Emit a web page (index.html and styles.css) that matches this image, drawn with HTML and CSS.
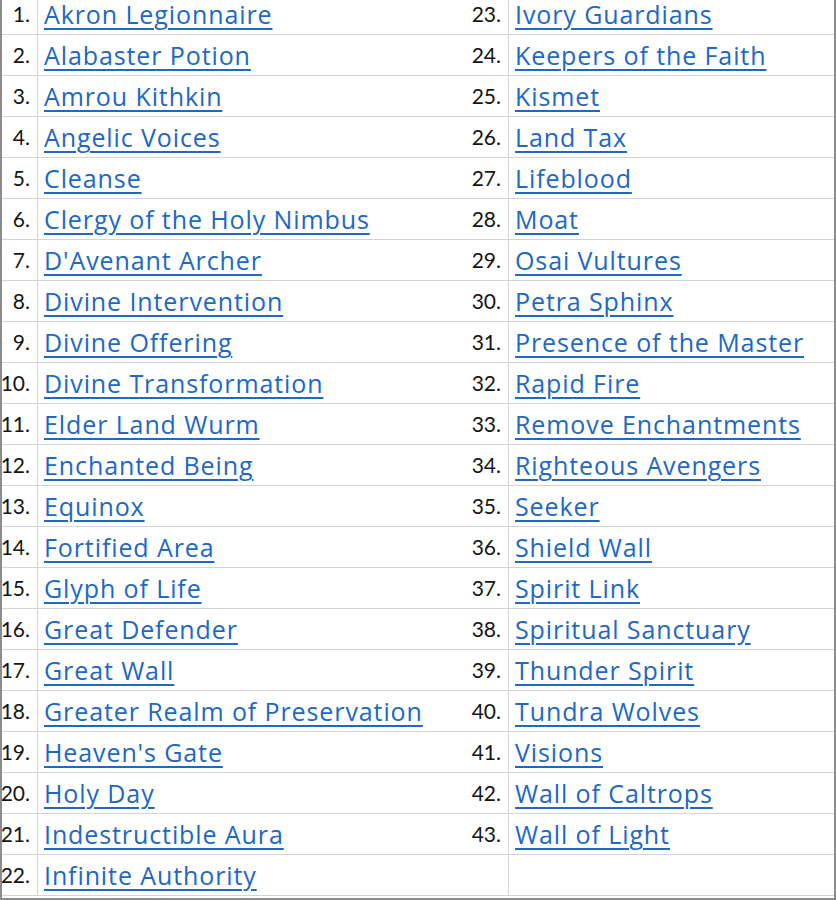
FILE: index.html
```html
<!DOCTYPE html>
<html>
<head>
<meta charset="utf-8">
<link rel="stylesheet" href="styles.css">
</head>
<body>
<div class="sheet">
  <div class="rows">
    <div class="row"><span class="num">1.</span><span class="name"><a href="#">Akron Legionnaire</a></span><span class="num num-r">23.</span><span class="name"><a href="#">Ivory Guardians</a></span></div>
    <div class="row"><span class="num">2.</span><span class="name"><a href="#">Alabaster Potion</a></span><span class="num num-r">24.</span><span class="name"><a href="#">Keepers of the Faith</a></span></div>
    <div class="row"><span class="num">3.</span><span class="name"><a href="#">Amrou Kithkin</a></span><span class="num num-r">25.</span><span class="name"><a href="#">Kismet</a></span></div>
    <div class="row"><span class="num">4.</span><span class="name"><a href="#">Angelic Voices</a></span><span class="num num-r">26.</span><span class="name"><a href="#">Land Tax</a></span></div>
    <div class="row"><span class="num">5.</span><span class="name"><a href="#">Cleanse</a></span><span class="num num-r">27.</span><span class="name"><a href="#">Lifeblood</a></span></div>
    <div class="row"><span class="num">6.</span><span class="name"><a href="#">Clergy of the Holy Nimbus</a></span><span class="num num-r">28.</span><span class="name"><a href="#">Moat</a></span></div>
    <div class="row"><span class="num">7.</span><span class="name"><a href="#">D'Avenant Archer</a></span><span class="num num-r">29.</span><span class="name"><a href="#">Osai Vultures</a></span></div>
    <div class="row"><span class="num">8.</span><span class="name"><a href="#">Divine Intervention</a></span><span class="num num-r">30.</span><span class="name"><a href="#">Petra Sphinx</a></span></div>
    <div class="row"><span class="num">9.</span><span class="name"><a href="#">Divine Offering</a></span><span class="num num-r">31.</span><span class="name"><a href="#">Presence of the Master</a></span></div>
    <div class="row"><span class="num">10.</span><span class="name"><a href="#">Divine Transformation</a></span><span class="num num-r">32.</span><span class="name"><a href="#">Rapid Fire</a></span></div>
    <div class="row"><span class="num">11.</span><span class="name"><a href="#">Elder Land Wurm</a></span><span class="num num-r">33.</span><span class="name"><a href="#">Remove Enchantments</a></span></div>
    <div class="row"><span class="num">12.</span><span class="name"><a href="#">Enchanted Being</a></span><span class="num num-r">34.</span><span class="name"><a href="#">Righteous Avengers</a></span></div>
    <div class="row"><span class="num">13.</span><span class="name"><a href="#">Equinox</a></span><span class="num num-r">35.</span><span class="name"><a href="#">Seeker</a></span></div>
    <div class="row"><span class="num">14.</span><span class="name"><a href="#">Fortified Area</a></span><span class="num num-r">36.</span><span class="name"><a href="#">Shield Wall</a></span></div>
    <div class="row"><span class="num">15.</span><span class="name"><a href="#">Glyph of Life</a></span><span class="num num-r">37.</span><span class="name"><a href="#">Spirit Link</a></span></div>
    <div class="row"><span class="num">16.</span><span class="name"><a href="#">Great Defender</a></span><span class="num num-r">38.</span><span class="name"><a href="#">Spiritual Sanctuary</a></span></div>
    <div class="row"><span class="num">17.</span><span class="name"><a href="#">Great Wall</a></span><span class="num num-r">39.</span><span class="name"><a href="#">Thunder Spirit</a></span></div>
    <div class="row"><span class="num">18.</span><span class="name"><a href="#">Greater Realm of Preservation</a></span><span class="num num-r">40.</span><span class="name"><a href="#">Tundra Wolves</a></span></div>
    <div class="row"><span class="num">19.</span><span class="name"><a href="#">Heaven's Gate</a></span><span class="num num-r">41.</span><span class="name"><a href="#">Visions</a></span></div>
    <div class="row"><span class="num">20.</span><span class="name"><a href="#">Holy Day</a></span><span class="num num-r">42.</span><span class="name"><a href="#">Wall of Caltrops</a></span></div>
    <div class="row"><span class="num">21.</span><span class="name"><a href="#">Indestructible Aura</a></span><span class="num num-r">43.</span><span class="name"><a href="#">Wall of Light</a></span></div>
    <div class="row"><span class="num">22.</span><span class="name"><a href="#">Infinite Authority</a></span><span class="num num-r"></span><span class="name"></span></div>
  </div>
</div>
</body>
</html>
```

FILE: styles.css
```css
html, body {
  margin: 0;
  padding: 0;
  background: #ffffff;
}

.sheet {
  width: 836px;
  height: 900px;
  box-sizing: border-box;
  border-left: 2px solid #8c8c8c;
  border-right: 2px solid #8c8c8c;
  border-bottom: 2px solid #8c8c8c;
  overflow: hidden;
  background: #ffffff;
  font-family: "Lato", "Open Sans", sans-serif;
}

.row {
  display: grid;
  grid-template-columns: 36px 425px 46px 1fr;
  height: 41px;
  box-sizing: border-box;
  border-bottom: 1px solid #d4d4d4;
}

.row:first-child {
  height: 35px;
}

.num,
.name {
  display: flex;
  align-items: flex-end;
  box-sizing: border-box;
  padding-bottom: 6px;
  line-height: 28px;
  white-space: nowrap;
}

.num {
  justify-content: flex-end;
  border-right: 1px solid #d4d4d4;
  padding-right: 7px;
  font-size: 21px;
  color: #141414;
}

.name {
  padding-left: 6px;
  overflow: hidden;
}

.name a {
  font-family: "Open Sans", "Lato", sans-serif;
  color: #2068c2;
  font-size: 25px;
  letter-spacing: 0.9px;
  font-variant-ligatures: none;
  text-decoration: underline;
  text-underline-offset: 4px;
  text-decoration-thickness: 2px;
}
```
